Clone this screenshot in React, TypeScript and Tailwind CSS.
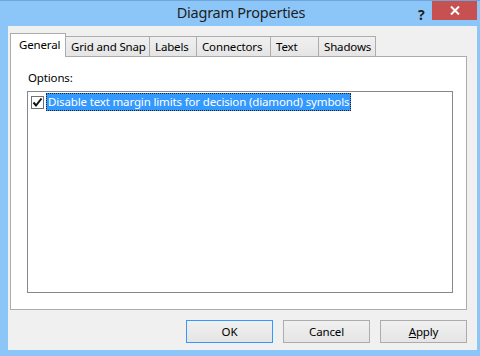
import React from "react";

const font = { fontFamily: '"Segoe UI", "Noto Sans", "Open Sans", sans-serif' };

function Tab({ label, w, active }: { label: string; w: string; active?: boolean }) {
  if (active) {
    return (
      <div
        className={`${w} h-[24px] -mb-px relative z-10 bg-white border border-[#acacac] border-b-0 flex items-center pl-[8px] text-[11.5px] tracking-[-0.15px] text-black pb-[2px]`}
      >
        {label}
      </div>
    );
  }
  return (
    <div
      className={`${w} h-[20px] bg-gradient-to-b from-[#f0f0f0] to-[#e5e5e5] border border-[#acacac] border-b-0 -ml-px first:ml-0 flex items-center pl-[5px] text-[11.5px] tracking-[-0.15px] text-black`}
    >
      {label}
    </div>
  );
}

function Button({ children, def }: { children: React.ReactNode; def?: boolean }) {
  return (
    <div
      className={`w-[87px] h-[23px] flex items-center justify-center text-[11.5px] tracking-[-0.15px] text-black bg-gradient-to-b from-[#f0f0f0] to-[#e5e5e5] border ${
        def ? "border-[#3399ff]" : "border-[#acacac]"
      }`}
    >
      {children}
    </div>
  );
}

export default function App() {
  return (
    <div
      className="w-[480px] h-[356px] bg-[#8cc6f8] flex flex-col overflow-hidden border-t border-[#6ea6d9]"
      style={font}
    >
      {/* Title bar */}
      <div className="h-[25px] relative flex items-center justify-center shrink-0">
        <span className="text-[14.5px] tracking-[-0.25px] text-[#1e1e1e] -mt-[2px] ml-[2px]">Diagram Properties</span>
        <span className="absolute left-[418px] top-[3px] text-[14px] font-bold text-[#222]">?</span>
        <div className="absolute left-[432px] top-0 w-[45px] h-[19px] bg-[#c75050] flex items-center justify-center">
          <svg width="10" height="9" viewBox="0 0 10 9">
            <path d="M1 0.5 L9 8.5 M9 0.5 L1 8.5" stroke="white" strokeWidth="2" />
          </svg>
        </div>
      </div>

      {/* Client area */}
      <div className="ml-[8px] mr-[3px] mb-[6px] flex-1 bg-[#f0f0f0] flex flex-col px-[2px] pt-[7px]">
        {/* tabs */}
        <div className="flex items-end h-[23px] shrink-0">
          <Tab label="General" w="w-[56px]" active />
          <Tab label="Grid and Snap" w="w-[85px]" />
          <Tab label="Labels" w="w-[48px]" />
          <Tab label="Connectors" w="w-[75px]" />
          <Tab label="Text" w="w-[49px]" />
          <Tab label="Shadows" w="w-[58px]" />
        </div>
        {/* panel */}
        <div className="w-[457px] h-[254px] bg-white border border-[#acacac] flex flex-col pl-[16px] pr-[13px] pt-[13px] pb-[16px]">
          <div className="text-[11.5px] tracking-[-0.15px] text-black h-[21px] leading-[16px] pl-[1px]">Options:</div>
          <div className="flex-1 border border-[#828790] bg-white pt-[1px] pl-[3px]">
            <div className="flex items-center h-[18px]">
              <div className="w-[13px] h-[13px] border border-[#707070] bg-white flex items-center justify-center mr-[2px]">
                <svg width="11" height="11" viewBox="0 0 11 11">
                  <path d="M1.5 5.5 L4 8.5 L9.5 1.5" stroke="#111" strokeWidth="2" fill="none" />
                </svg>
              </div>
              <div className="h-[18px] bg-[#3399ff] border border-dotted border-[#222] text-white text-[11.5px] tracking-[-0.15px] leading-[15px] px-[1px] whitespace-nowrap">
                Disable text margin limits for decision (diamond) symbols
              </div>
            </div>
          </div>
        </div>
        {/* buttons */}
        <div className="flex gap-[10px] justify-end mt-[10px] w-[457px]">
          <Button def>OK</Button>
          <Button>Cancel</Button>
          <Button>
            <span>
              <span className="underline">A</span>pply
            </span>
          </Button>
        </div>
      </div>
    </div>
  );
}
